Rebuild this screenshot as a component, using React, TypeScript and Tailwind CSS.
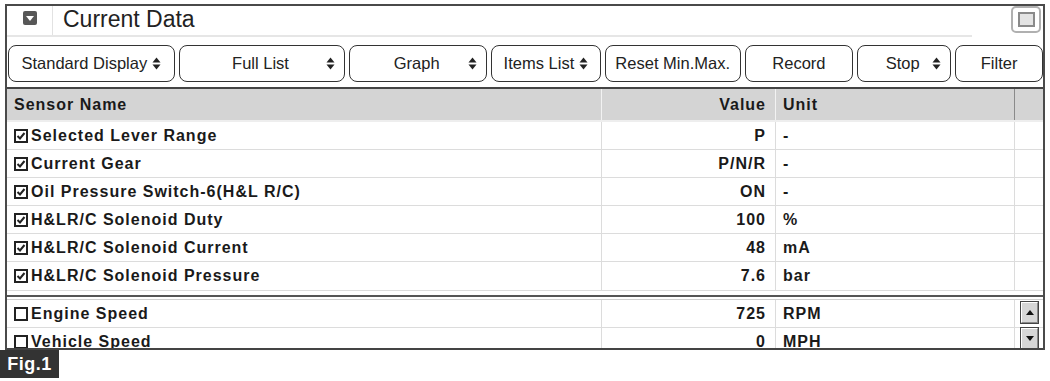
import React from 'react';

const font = "font-['Liberation_Sans',Arial,sans-serif]";

const checked = [
    { name: 'Selected Lever Range', value: 'P', unit: '-' },
    { name: 'Current Gear', value: 'P/N/R', unit: '-' },
    { name: 'Oil Pressure Switch-6(H&L R/C)', value: 'ON', unit: '-' },
    { name: 'H&LR/C Solenoid Duty', value: '100', unit: '%' },
    { name: 'H&LR/C Solenoid Current', value: '48', unit: 'mA' },
    { name: 'H&LR/C Solenoid Pressure', value: '7.6', unit: 'bar' },
];

const unchecked = [
    { name: 'Engine Speed', value: '725', unit: 'RPM' },
    { name: 'Vehicle Speed', value: '0', unit: 'MPH' },
];

function UpDown() {
    return (
        <svg width="9" height="13" viewBox="0 0 9 13" className="shrink-0">
            <path d="M4.5 0.5 L8.5 5.5 L0.5 5.5 Z" fill="#222" />
            <path d="M4.5 12.5 L8.5 7.5 L0.5 7.5 Z" fill="#222" />
        </svg>
    );
}

function Check({ on }: { on: boolean }) {
    return (
        <div className="w-[14px] h-[14px] border-2 border-[#222] bg-white flex items-center justify-center shrink-0">
            {on && (
                <svg width="10" height="10" viewBox="0 0 10 10">
                    <path d="M1.5 5 L4 7.5 L8.5 2" stroke="#222" strokeWidth="2" fill="none" />
                </svg>
            )}
        </div>
    );
}

function Row({ name, value, unit, on, last }: { name: string; value: string; unit: string; on: boolean; last?: boolean }) {
    return (
        <div className={`grid grid-cols-[595px_174px_239px_1fr] h-[28px] ${last ? '' : 'border-b border-[#dcdcdc]'}`}>
            <div className="flex items-center gap-[3px] pl-[7px] border-r border-[#dcdcdc]">
                <Check on={on} />
                <span className="text-[16px] font-bold tracking-[1px] text-[#1a1a1a]">{name}</span>
            </div>
            <div className="flex items-center justify-end pr-[9px] border-r border-[#dcdcdc] text-[16px] font-bold tracking-[1px] text-[#1a1a1a]">
                {value}
            </div>
            <div className="flex items-center pl-[7px] border-r border-[#dcdcdc] text-[16px] font-bold tracking-[1px] text-[#1a1a1a]">
                {unit}
            </div>
            <div />
        </div>
    );
}

function ScrollBtn({ up }: { up: boolean }) {
    return (
        <div className="w-[19px] h-[23px] bg-[#d6d6d6] border border-[#444] flex items-center justify-center">
            <div className="w-full h-full border-t border-l border-white border-b border-r border-b-[#888] border-r-[#888] flex items-center justify-center">
                <svg width="8" height="5" viewBox="0 0 8 5">
                    {up ? <path d="M4 0 L8 5 L0 5 Z" fill="#111" /> : <path d="M4 5 L8 0 L0 0 Z" fill="#111" />}
                </svg>
            </div>
        </div>
    );
}

const buttons: { label: string; w: string; arrow?: boolean; center?: boolean }[] = [
    { label: 'Standard Display', w: 'w-[167px]', arrow: true },
    { label: 'Full List', w: 'w-[167px]', arrow: true, center: true },
    { label: 'Graph', w: 'w-[138px]', arrow: true, center: true },
    { label: 'Items List', w: 'w-[110px]', arrow: true },
    { label: 'Reset Min.Max.', w: 'w-[136px]' },
    { label: 'Record', w: 'w-[109px]' },
    { label: 'Stop', w: 'w-[94px]', arrow: true, center: true },
    { label: 'Filter', w: 'w-[88px]' },
];

export default function App() {
    return (
        <div className={`relative w-[1050px] h-[381px] bg-white overflow-hidden pt-[4px] ${font}`}>
            <div className="ml-[5px] w-[1040px] border-t-2 border-l-2 border-r-2 border-[#4a4a4a]">
                {/* Title bar */}
                <div className="flex h-[29px]">
                    <div className="w-[46px] h-full flex items-start pt-[5px] justify-center border-r border-[#e2e2e2]">
                        <div className="w-[14px] h-[14px] rounded-[2px] bg-[#575757] flex items-center justify-center">
                            <svg width="8" height="5" viewBox="0 0 8 5">
                                <path d="M0 0 L8 0 L4 5 Z" fill="#fff" />
                            </svg>
                        </div>
                    </div>
                    <span className="ml-[10px] mt-[2px] text-[23px] text-[#222] leading-none">Current Data</span>
                    <div className="ml-auto mr-[2px] w-[30px] h-[27px] rounded-[5px] border-2 border-[#b0b0b0] flex items-center justify-center">
                        <div className="w-[17px] h-[15px] border-2 border-[#8a8a8a] bg-[#e4e4e4]" />
                    </div>
                </div>
                <div className="w-[965px] h-[2px] bg-[#e6e6e6]" />

                {/* Buttons */}
                <div className="flex gap-[4px] mt-[8px] pl-[1px]">
                    {buttons.map((b) => (
                        <div
                            key={b.label}
                            className={`${b.w} h-[37px] rounded-[8px] border-[1.5px] border-[#333] flex items-center px-[9px] text-[16.5px] text-[#222] ${b.arrow ? (b.center ? 'justify-end' : 'justify-center gap-[5px]') : 'justify-center'}`}
                        >
                            {b.center ? (
                                <>
                                    <span className="flex-1 text-center pl-[6px]">{b.label}</span>
                                    <UpDown />
                                </>
                            ) : (
                                <>
                                    <span>{b.label}</span>
                                    {b.arrow && <UpDown />}
                                </>
                            )}
                        </div>
                    ))}
                </div>

                {/* Table */}
                <div className="mt-[5px] border-t-2 border-[#444]">
                    <div className="grid grid-cols-[595px_174px_239px_1fr] h-[33px] bg-[#d4d4d4] border-b-2 border-[#eeeeee] text-[16px] font-bold tracking-[1px] text-[#1a1a1a]">
                        <div className="flex items-center pl-[7px] border-r border-[#f2f2f2]">Sensor Name</div>
                        <div className="flex items-center justify-end pr-[9px] border-r border-[#f2f2f2]">Value</div>
                        <div className="flex items-center pl-[7px] border-r border-[#8a8a8a]">Unit</div>
                        <div />
                    </div>
                    {checked.map((r, i) => (
                        <Row key={r.name} {...r} on last={i === checked.length - 1} />
                    ))}
                    <div className="h-[5px] border-t border-[#dcdcdc]" />
                    <div className="border-t-2 border-[#555] border-b border-b-[#cfcfcf] h-[5px]" />
                    <div className="relative h-[48px] overflow-hidden">
                        {unchecked.map((r) => (
                            <Row key={r.name} {...r} on={false} />
                        ))}
                        <div className="absolute right-[4px] top-[1px] flex flex-col gap-[3px]">
                            <ScrollBtn up />
                            <ScrollBtn up={false} />
                        </div>
                    </div>
                </div>
                <div className="h-[2px] bg-[#444]" />
            </div>

            <div className="absolute left-0 top-[350px] w-[59px] h-[28px] bg-[#333] flex items-center justify-center">
                <span className="text-white text-[18px] font-bold tracking-[0.5px]">Fig.1</span>
            </div>
        </div>
    );
}
